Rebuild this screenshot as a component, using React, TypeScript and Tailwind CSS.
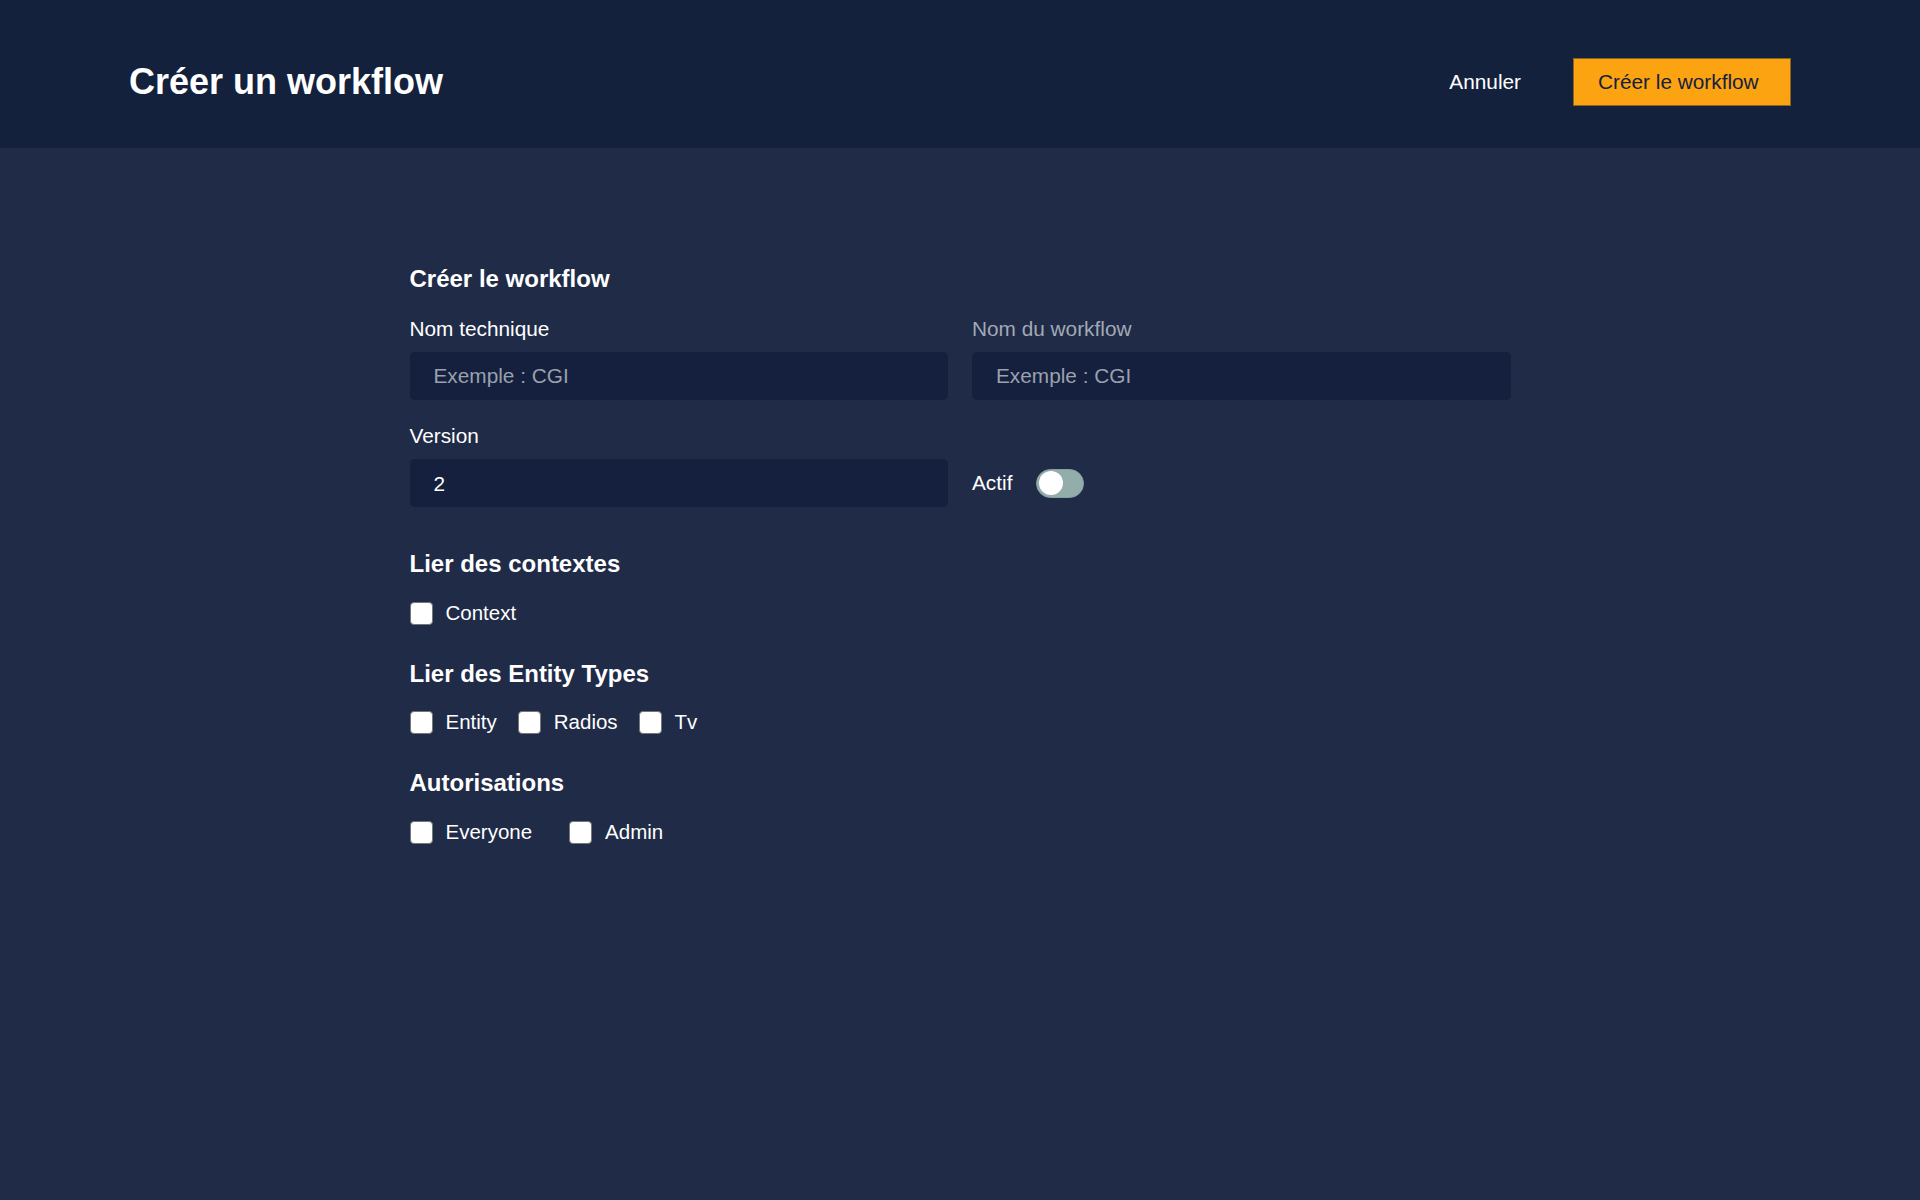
import React from "react";

function Checkbox({ label }: { label: string }) {
  return (
    <label className="flex items-center gap-[13px] h-[28px] leading-[28px] text-[20.5px] text-white">
      <span className="block w-[23px] h-[23px] bg-white border border-[#767676] rounded-[4px] shrink-0" />
      <span>{label}</span>
    </label>
  );
}

function SectionTitle({ children }: { children: React.ReactNode }) {
  return <h2 className="text-[24px] leading-[28px] font-bold text-white">{children}</h2>;
}

export default function App() {
  return (
    <div className="min-h-screen bg-[#1f2b47] font-['Liberation_Sans',Arial,sans-serif]">
      <header className="h-[148px] bg-[#14213d] pt-[16px] pl-[129px] pr-[129px] flex items-center justify-between">
        <h1 className="text-[36px] leading-[40px] font-bold text-white">Créer un workflow</h1>
        <div className="flex items-center">
          <button className="text-[20.8px] leading-[28px] text-white mr-[52px]">Annuler</button>
          <button className="w-[218px] h-[48px] bg-[#fca311] border border-[#8a6422] text-[20.8px] leading-[28px] text-[#14213d] text-left pl-[24px]">
            Créer le workflow
          </button>
        </div>
      </header>

      <main className="pt-[117px]">
        <div className="w-[1101px] mx-auto">
          <SectionTitle>Créer le workflow</SectionTitle>

          <div className="grid grid-cols-2 gap-x-[24px] mt-[22px]">
            <div>
              <div className="text-[20.8px] leading-[28px] text-white">Nom technique</div>
              <input
                className="mt-[9px] w-full h-[48px] rounded-[5px] bg-[#14203d] px-[24px] text-[20.8px] text-white placeholder:text-[#9ba1ae] outline-none"
                placeholder="Exemple : CGI"
              />
            </div>
            <div>
              <div className="text-[20.8px] leading-[28px] text-[#a3a9b6]">Nom du workflow</div>
              <input
                className="mt-[9px] w-full h-[48px] rounded-[5px] bg-[#14203d] px-[24px] text-[20.8px] text-white placeholder:text-[#9ba1ae] outline-none"
                placeholder="Exemple : CGI"
              />
            </div>

            <div className="mt-[22px]">
              <div className="text-[20.8px] leading-[28px] text-white">Version</div>
              <input
                className="mt-[9px] w-full h-[48px] rounded-[5px] bg-[#14203d] px-[24px] pt-[2px] text-[20.8px] text-white placeholder:text-[#9ba1ae] outline-none"
                defaultValue="2"
              />
            </div>
            <div className="mt-[22px]">
              <div className="h-[28px]" />
              <div className="mt-[9px] h-[48px] flex items-center gap-[24px]">
                <span className="text-[20.8px] leading-[28px] text-white">Actif</span>
                <span className="relative block w-[48px] h-[29px] rounded-full bg-[#93adab] border border-[#86a19f]">
                  <span className="absolute left-[2px] top-[1.5px] w-[24px] h-[24px] rounded-full bg-white" />
                </span>
              </div>
            </div>
          </div>

          <div className="mt-[43px]">
            <SectionTitle>Lier des contextes</SectionTitle>
            <div className="mt-[21px] flex">
              <Checkbox label="Context" />
            </div>
          </div>

          <div className="mt-[33px]">
            <SectionTitle>Lier des Entity Types</SectionTitle>
            <div className="mt-[20px] flex gap-[21px]">
              <Checkbox label="Entity" />
              <Checkbox label="Radios" />
              <Checkbox label="Tv" />
            </div>
          </div>

          <div className="mt-[33px]">
            <SectionTitle>Autorisations</SectionTitle>
            <div className="mt-[21px] flex gap-[37px]">
              <Checkbox label="Everyone" />
              <Checkbox label="Admin" />
            </div>
          </div>
        </div>
      </main>
    </div>
  );
}
